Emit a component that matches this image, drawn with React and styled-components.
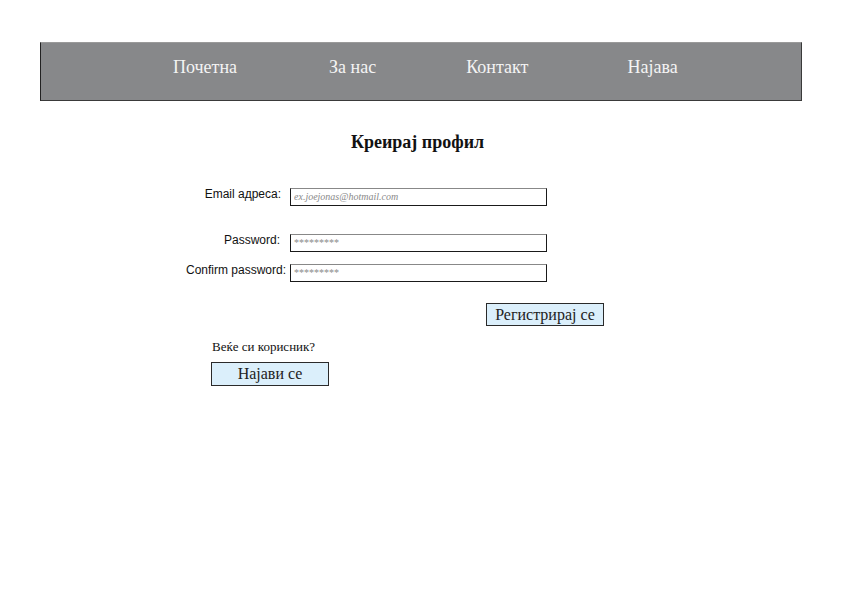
import styled, { createGlobalStyle } from "styled-components"

const GlobalStyle = createGlobalStyle`
  body {
    margin: 0;
    background: #fff;
    font-family: "Liberation Serif", "Times New Roman", serif;
    color: #111;
  }
`

const Page = styled.div`
  padding-top: 42px;
`

const Navbar = styled.nav`
  margin: 0 40px;
  height: 57px;
  background: #87888a;
  border: 1px solid #3a3a3a;
  border-top-color: #9a9a9a;
  border-left-color: #222;
  display: flex;
  align-items: flex-start;
  padding-left: 132px;
  box-sizing: content-box;
`

const NavLink = styled.a`
  color: #f4f4f4;
  font-size: 18px;
  line-height: 20px;
  margin-top: 14px;
  text-decoration: none;
  margin-right: ${(p) => p.$gap}px;
`

const Title = styled.h1`
  margin: 31px 0 0;
  text-align: center;
  font-size: 18px;
  font-weight: bold;
  line-height: 20px;
  padding-right: 7px;
`

const Form = styled.form`
  margin: 36px 0 0 186px;
  display: flex;
  flex-direction: column;
`

const Row = styled.div`
  display: flex;
  align-items: flex-start;
  margin-top: ${(p) => p.$top || 0}px;
`

const Label = styled.label`
  width: ${(p) => 100 - (p.$pr || 0)}px;
  padding-right: ${(p) => p.$pr || 0}px;
  text-align: right;
  white-space: nowrap;
  font-family: "Liberation Sans", Arial, sans-serif;
  font-size: 12px;
  line-height: 14px;
  margin-top: -1px;
  color: #111;
`

const InputBox = styled.div`
  height: 18px;
  display: flex;
  align-items: flex-start;
`

const Input = styled.input`
  margin-left: 4px;
  width: 257px;
  height: 18px;
  box-sizing: border-box;
  border: 1px solid #1a1a1a;
  border-top-color: #888;
  padding: 0 0 2px 3px;
  font-family: "Liberation Serif", "Times New Roman", serif;
  font-size: 10px;
  line-height: 12px;
  outline: none;

  &::placeholder {
    color: #8a8a8a;
    font-style: ${(p) => (p.$italic ? "italic" : "normal")};
  }
`

const ButtonRow = styled.div`
  margin: 21px 0 0 486px;
`

const Button = styled.button`
  width: ${(p) => p.$w}px;
  height: ${(p) => p.$h}px;
  background: #dbeffb;
  border: 1px solid #2a2a2a;
  font-family: "Liberation Serif", "Times New Roman", serif;
  font-size: 16px;
  color: #222;
  padding: 0;
  cursor: pointer;
`

const Login = styled.div`
  margin: 13px 0 0 211px;
  display: flex;
  flex-direction: column;
  align-items: flex-start;
`

const Question = styled.p`
  margin: 0 0 0 1px;
  font-size: 13px;
  line-height: 15px;
`

const LoginButton = styled(Button)`
  margin-top: 8px;
`

const App = () => {
  return (
    <Page>
      <GlobalStyle />
      <Navbar>
        <NavLink href="#" $gap={92}>Почетна</NavLink>
        <NavLink href="#" $gap={90}>За нас</NavLink>
        <NavLink href="#" $gap={99}>Контакт</NavLink>
        <NavLink href="#" $gap={0}>Најава</NavLink>
      </Navbar>

      <Title>Креирај профил</Title>

      <Form onSubmit={(e) => e.preventDefault()}>
        <Row>
          <Label $pr={5}>Email адреса:</Label>
          <InputBox>
            <Input type="email" placeholder="ex.joejonas@hotmail.com" $italic />
          </InputBox>
        </Row>
        <Row $top={28}>
          <Label $pr={6}>Password:</Label>
          <InputBox>
            <Input type="password" placeholder="*********" />
          </InputBox>
        </Row>
        <Row $top={12}>
          <Label>Confirm password:</Label>
          <InputBox>
            <Input type="password" placeholder="*********" />
          </InputBox>
        </Row>
      </Form>

      <ButtonRow>
        <Button type="button" $w={118} $h={23}>Регистрирај се</Button>
      </ButtonRow>

      <Login>
        <Question>Веќе си корисник?</Question>
        <LoginButton type="button" $w={118} $h={24}>Најави се</LoginButton>
      </Login>
    </Page>
  )
}

export default App
